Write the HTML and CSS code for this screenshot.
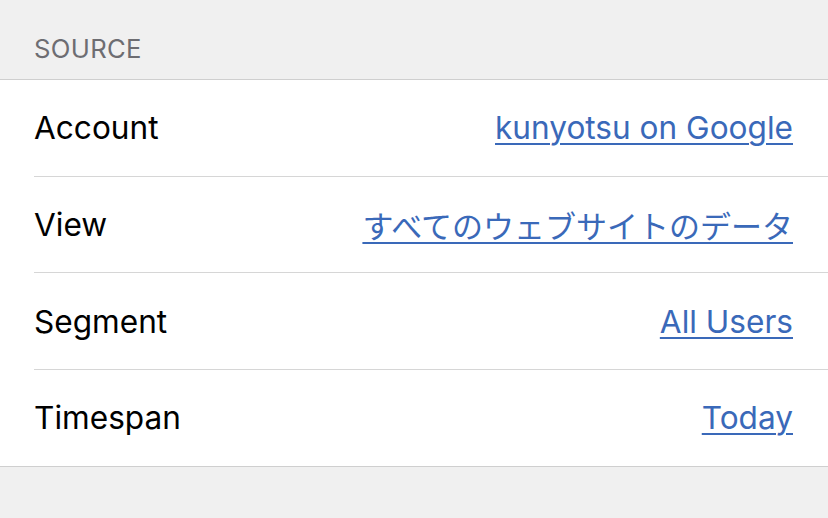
FILE: index.html
```html
<!DOCTYPE html>
<html lang="ja">
<head>
<meta charset="utf-8">
<link rel="stylesheet" href="styles.css">
</head>
<body>
<div class="page">
  <div class="section-header">SOURCE</div>
  <div class="list">
    <div class="row"><span class="label">Account</span><a class="value" href="#">kunyotsu on Google</a></div>
    <div class="row"><span class="label">View</span><a class="value ja" href="#">すべてのウェブサイトのデータ</a></div>
    <div class="row"><span class="label">Segment</span><a class="value" href="#">All Users</a></div>
    <div class="row"><span class="label">Timespan</span><a class="value" href="#">Today</a></div>
  </div>
</div>
</body>
</html>
```

FILE: styles.css
```css
html, body {
  margin: 0;
  padding: 0;
}
body {
  background: #f0f0f0;
  font-family: Inter, "Noto Sans CJK JP", sans-serif;
  width: 828px;
  height: 518px;
  overflow: hidden;
}
.section-header {
  height: 79px;
  box-sizing: border-box;
  padding: 34px 0 0 34px;
  font-size: 25.7px;
  line-height: 30px;
  color: #6d6d72;
  letter-spacing: 0.3px;
}
.list {
  background: #fff;
  border-top: 1px solid #cfcfcf;
  border-bottom: 1px solid #cfcfcf;
}
.row {
  height: 95.7px;
  display: flex;
  align-items: center;
  justify-content: space-between;
  padding: 0 35px 0 0;
  margin-left: 34px;
  font-size: 31.6px;
  border-bottom: 1px solid #d6d6d6;
  box-sizing: content-box;
}
.row:last-child {
  border-bottom: none;
}
.label {
  color: #000;
}
.value {
  color: #3a69b9;
  text-decoration: underline;
  text-decoration-thickness: 2px;
  text-underline-offset: 4px;
}
.value.ja {
  font-size: 31px;
}
```
